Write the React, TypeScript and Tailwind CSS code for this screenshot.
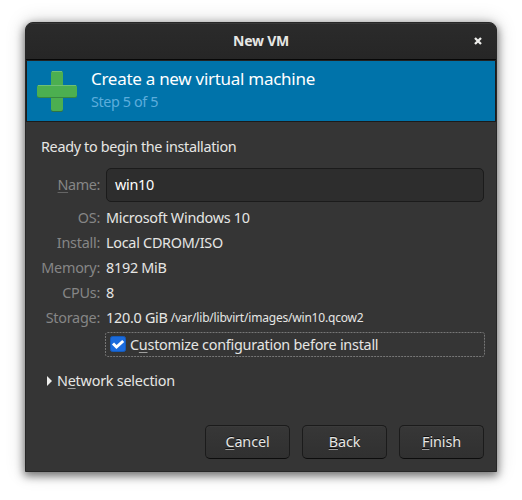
import React from 'react';

function Row({ label, children }: { label: React.ReactNode; children: React.ReactNode }) {
  return (
    <div className="flex h-[25px] items-center">
      <div className="w-[59px] shrink-0 text-right tracking-[-0.25px] text-[#868686]">{label}</div>
      <div className="ml-[6px] flex items-center">{children}</div>
    </div>
  );
}

function Key({ children }: { children: string }) {
  return <span className="underline decoration-1 decoration-current/60 underline-offset-2">{children}</span>;
}

function Button({ hot, rest }: { hot: string; rest: string }) {
  return (
    <button className="h-[34px] w-[85px] rounded-[5px] border border-[#1b1b1b] border-b-[#0c0c0c] bg-linear-to-b from-[#373737] to-[#303030] tracking-[-0.1px] shadow-[inset_0_1px_0_#3b3b3b] [text-shadow:0_-1px_0_#000000b0]">
      <Key>{hot}</Key>{rest}
    </button>
  );
}

export default function App() {
  return (
    <div className="flex h-[500px] w-[522px] items-start overflow-hidden bg-white pt-[22px] pl-[25px] font-['Noto_Sans','Open_Sans',sans-serif] text-[14.4px] leading-[20px] tracking-[-0.27px] whitespace-nowrap text-[#e6e6e4]">
      <div className="flex h-[450px] w-[472px] flex-col overflow-hidden rounded-t-[8px] border border-[#272727] bg-[#353535] shadow-[0_3px_9px_1px_rgba(0,0,0,0.5),0_0_20px_rgba(0,0,0,0.18)]">
        <header className="relative flex h-[36px] shrink-0 items-center justify-center bg-linear-to-b from-[#2b2b2b] to-[#262626] shadow-[inset_0_1px_0_#383838]">
          <span className="text-[14px] font-bold tracking-[-0.25px]">New VM</span>
          <svg className="absolute top-[14px] right-[14px]" width="8" height="8" viewBox="0 0 8 8">
            <path d="M1 1 L7 7 M7 1 L1 7" stroke="#eeeeec" strokeWidth="2.3" />
          </svg>
        </header>
        <section className="flex h-[63px] shrink-0 border-t border-b border-t-[#070707] border-b-[#1b1b1b] bg-[#0073aa] pt-px shadow-[inset_0_1px_0_#222222,inset_1px_0_0_#1b1b1b,inset_-1px_0_0_#1b1b1b]">
          <svg className="mt-[10px] ml-[11px]" width="40" height="41" viewBox="0 0 40 41">
            <rect x="14" y="1" width="12" height="40" rx="2" fill="#2e7149" />
            <rect x="14" y="0" width="12" height="40" rx="2" fill="#4caf50" />
            <path d="M15 .5H25" stroke="#70bf73" />
            <rect y="15" width="40" height="12" rx="2" fill="#38873f" />
            <rect y="14" width="40" height="12" rx="2" fill="#4caf50" />
            <path d="M1 14.5H39" stroke="#70bf73" />
          </svg>
          <div className="ml-[14px] pt-[6px]">
            <div className="text-[17px] leading-[24px] tracking-[-0.28px] text-white">Create a new virtual machine</div>
            <div className="pt-px leading-[20px] tracking-[-0.4px] text-[#5caddc]">Step 5 of 5</div>
          </div>
        </section>
        <main className="pt-[15px] pl-[15px]">
          <div className="tracking-[-0.33px]">Ready to begin the installation</div>
          <div className="mt-[11px] mb-[3px] flex h-[34px] items-center">
            <div className="w-[59px] text-right tracking-[-0.4px] text-[#868686]"><Key>N</Key>ame:</div>
            <div className="ml-[6px] flex h-[34px] w-[378px] items-center rounded-[5px] border border-[#1b1b1b] bg-[#2d2d2d] pl-[8px] text-white">win10</div>
          </div>
          <Row label="OS:">Microsoft Windows 10</Row>
          <Row label="Install:">Local CDROM/ISO</Row>
          <Row label="Memory:">8192 MiB</Row>
          <Row label="CPUs:">8</Row>
          <Row label="Storage:">120.0 GiB<span className="ml-[3px] text-[12px] tracking-[-0.2px]">/var/lib/libvirt/images/win10.qcow2</span></Row>
          <div className="relative mt-[2px] ml-[64px] flex h-[25px] w-[380px] items-center pl-[5px]">
            <svg className="absolute inset-0" width="380" height="25" viewBox="0 0 380 25">
              <rect x=".5" y=".5" width="379" height="24" rx="2" fill="none" stroke="#777777" strokeDasharray="2 1" />
            </svg>
            <svg className="-mt-px" width="16" height="16" viewBox="0 0 16 16">
              <rect x=".5" y=".5" width="15" height="15" rx="2" fill="#1b6bdd" stroke="#155bbb" />
              <path d="M3 7.5 L6.5 11 L13.2 5" fill="none" stroke="#fff" strokeWidth="3" />
            </svg>
            <span className="ml-[4px] tracking-[-0.25px]">C<Key>u</Key>stomize configuration before install</span>
          </div>
          <div className="mt-[14px] flex items-center">
            <svg className="-mt-px ml-[6px]" width="5" height="10" viewBox="0 0 5 10"><path d="M0 0L5 5L0 10Z" fill="#eeeeec" /></svg>
            <span className="ml-[5px] tracking-[-0.23px]">N<Key>e</Key>twork selection</span>
          </div>
        </main>
        <footer className="mt-auto mr-[12px] mb-[12px] flex justify-end gap-[12px]">
          <Button hot="C" rest="ancel" />
          <Button hot="B" rest="ack" />
          <Button hot="F" rest="inish" />
        </footer>
      </div>
    </div>
  );
}
